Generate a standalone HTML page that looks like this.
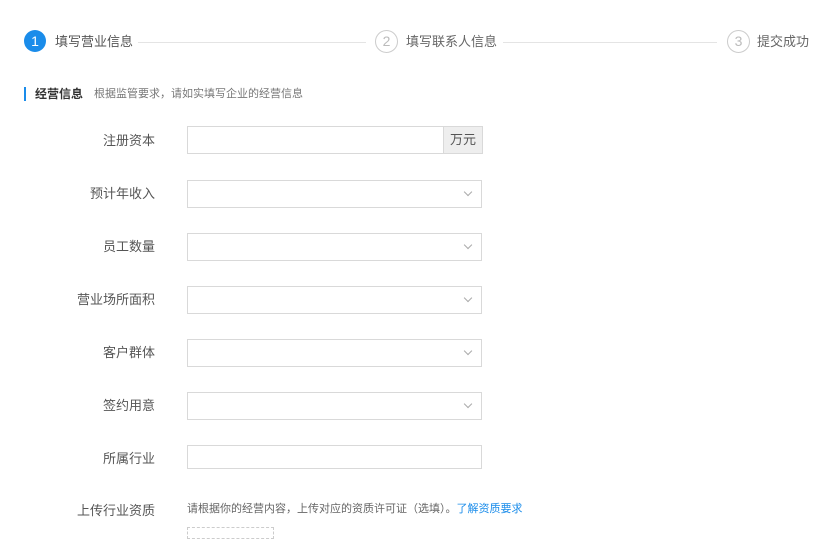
<!DOCTYPE html><html><head><meta charset="utf-8"><style>
body{margin:0;width:832px;height:534px;background:#fff;font-family:"Liberation Sans","Noto Sans CJK SC",sans-serif;position:relative;overflow:hidden;color:#333}
.a{position:absolute}
.c{position:absolute;width:22px;height:22px;border-radius:50%;text-align:center;line-height:22px;font-size:14px;top:30px}
.st{position:absolute;top:33px;font-size:13px;color:#666;line-height:18px}
.ln{position:absolute;top:42px;height:1px;background:#e4e4e4}
.lb{position:absolute;left:40px;width:115px;text-align:right;font-size:13px;color:#555;line-height:18px}
.in{position:absolute;left:187px;width:293px;height:26px;border:1px solid #d9d9d9;background:#fff}
.ar{position:absolute;right:10px;top:8px;width:5px;height:5px;border-right:1px solid #aaa;border-bottom:1px solid #aaa;transform:rotate(45deg)}
</style></head><body>
<div class="c" style="left:24px;background:#1a8cea;color:#fff">1</div>
<div class="st" style="left:55px;color:#555">填写营业信息</div>
<div class="ln" style="left:138px;width:228px"></div>
<div class="c" style="left:375px;border:1px solid #ccc;width:21px;height:21px;line-height:21px;top:30px;color:#bbb">2</div>
<div class="st" style="left:406px">填写联系人信息</div>
<div class="ln" style="left:503px;width:214px"></div>
<div class="c" style="left:727px;border:1px solid #ccc;width:21px;height:21px;line-height:21px;top:30px;color:#bbb">3</div>
<div class="st" style="left:757px">提交成功</div>
<div class="a" style="left:24px;top:87px;width:2px;height:14px;background:#1a8cea"></div>
<div class="a" style="left:35px;top:86px;font-size:12px;font-weight:bold;color:#333;line-height:16px">经营信息</div>
<div class="a" style="left:94px;top:87px;font-size:11px;color:#777;line-height:15px">根据监管要求，请如实填写企业的经营信息</div>

<div class="lb" style="top:132px">注册资本</div>
<div class="in" style="top:126px;width:255px"></div>
<div class="a" style="left:443px;top:126px;width:38px;height:26px;border:1px solid #d9d9d9;background:#eee;font-size:13px;line-height:26px;text-align:center;color:#555">万元</div>

<div class="lb" style="top:185px">预计年收入</div><div class="in" style="top:180px"><div class="ar"></div></div>
<div class="lb" style="top:238px">员工数量</div><div class="in" style="top:233px"><div class="ar"></div></div>
<div class="lb" style="top:291px">营业场所面积</div><div class="in" style="top:286px"><div class="ar"></div></div>
<div class="lb" style="top:344px">客户群体</div><div class="in" style="top:339px"><div class="ar"></div></div>
<div class="lb" style="top:397px">签约用意</div><div class="in" style="top:392px"><div class="ar"></div></div>
<div class="lb" style="top:450px">所属行业</div><div class="in" style="top:445px;height:22px"></div>
<div class="lb" style="top:502px">上传行业资质</div>
<div class="a" style="left:187px;top:502px;font-size:11px;color:#666;line-height:15px">请根据你的经营内容，上传对应的资质许可证（选填）。<span style="color:#1a8cea">了解资质要求</span></div>
<div class="a" style="left:187px;top:527px;width:85px;height:10px;border:1px dashed #ccc"></div>
</body></html>
